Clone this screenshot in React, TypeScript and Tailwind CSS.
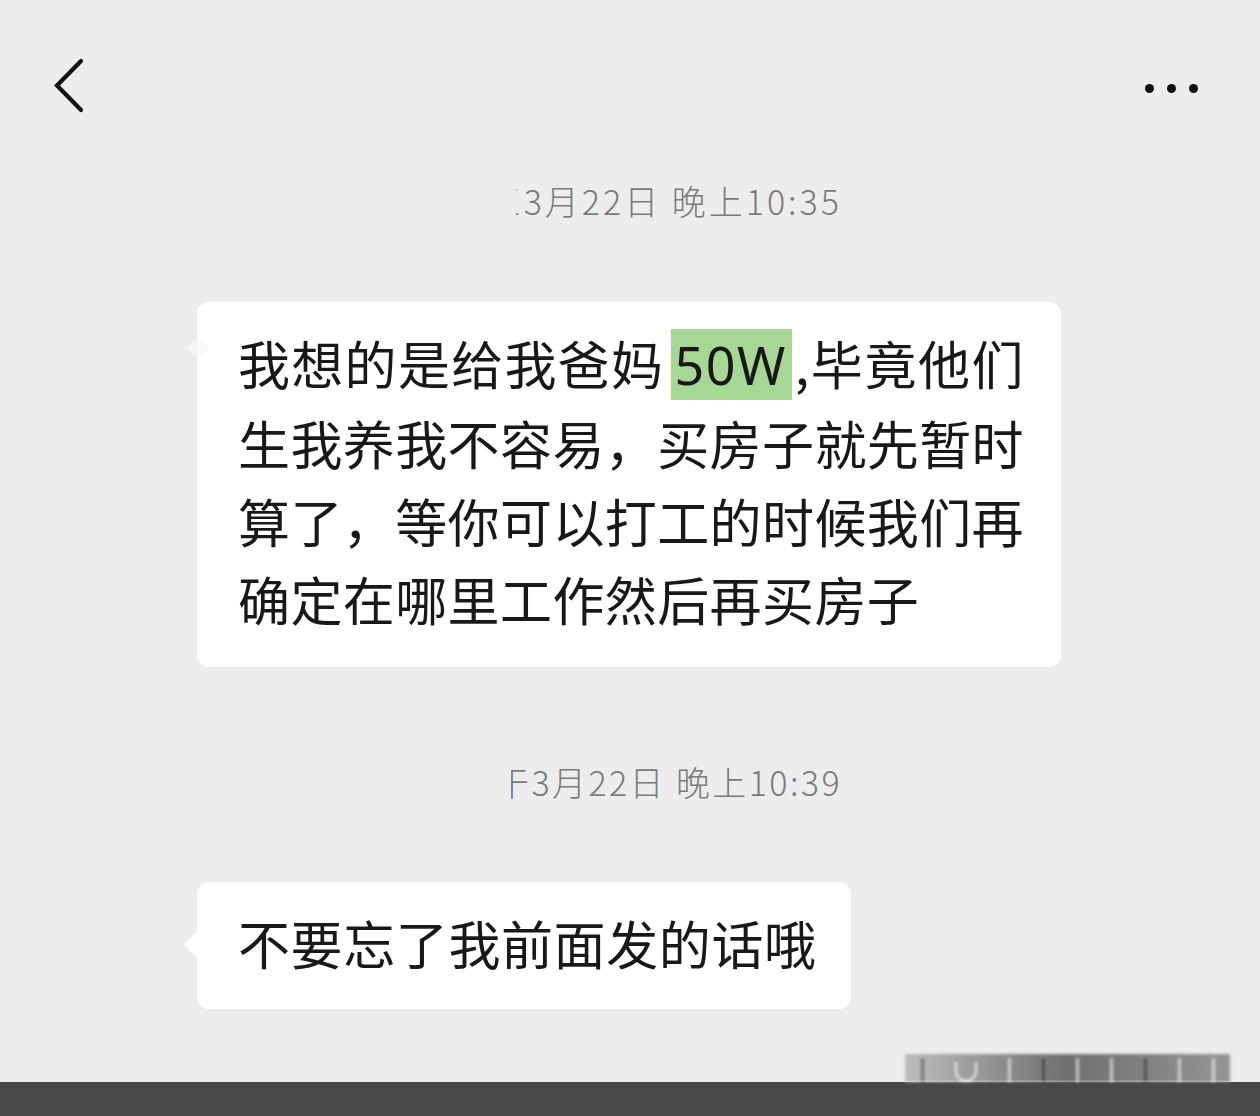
import React from "react";

const cjk = { fontFamily: '"Noto Sans CJK SC", "Noto Sans", sans-serif' };

function Timestamp({ cut, text, cutW, track }: { cut: string; text: string; cutW: string; track: string }) {
  return (
    <div className={`flex justify-end w-[842px] h-[40px] items-center text-[34px] leading-[40px] text-[#7b7b7b] font-light ${track}`} style={cjk}>
      <span className={`overflow-hidden ${cutW} flex justify-end`}>
        <span className="shrink-0">{cut}</span>
      </span>
      <span className="whitespace-pre">{text}</span>
    </div>
  );
}

export default function App() {
  return (
    <div className="w-[1260px] h-[1116px] bg-[#ededed] flex flex-col overflow-hidden" style={cjk}>
      <div className="h-[172px] flex items-center justify-between pl-[52px] pr-[62px]">
        <svg width="34" height="56" viewBox="0 0 34 56">
          <path d="M29 3 L5 27.5 L29 52" fill="none" stroke="#111" strokeWidth="4.2" strokeLinecap="round" strokeLinejoin="miter" />
        </svg>
        <div className="flex items-center gap-[13px] mt-[4px]">
          <span className="w-[9px] h-[9px] rounded-full bg-[#111]" />
          <span className="w-[9px] h-[9px] rounded-full bg-[#111]" />
          <span className="w-[9px] h-[9px] rounded-full bg-[#111]" />
        </div>
      </div>

      <div className="mt-[9px]">
        <Timestamp cut="三" text="3月22日 晚上10:35" cutW="w-[8px]" track="tracking-[3px]" />
      </div>

      <div className="mt-[81px] ml-[197px] relative w-[864px] bg-white rounded-[12px] pl-[41px] pr-[20px] pt-[22px] pb-[29px] text-[52px] leading-[78px] text-[#181818] tracking-[0.4px]">
        <div className="absolute left-[-7px] top-[38px] w-[16px] h-[16px] bg-[#f7f7f7] rotate-45 opacity-70" />
        <div className="whitespace-nowrap">
          <span className="tracking-[1.3px]">我想的是给我爸妈</span>
          <span className="bg-[#a6d795] pl-[3px] pr-[5px] ml-[7px] mr-[3px] tracking-[1.5px]" style={{ fontFamily: '"Noto Sans", "Noto Sans CJK SC", sans-serif' }}>50W</span>
          <span className="tracking-[1.6px]">,毕竟他们</span>
        </div>
        <div>生我养我不容易，买房子就先暂时</div>
        <div>算了，等你可以打工的时候我们再</div>
        <div>确定在哪里工作然后再买房子</div>
      </div>

      <div className="mt-[95px]">
        <Timestamp cut="干" text="3月22日 晚上10:39" cutW="w-[20px]" track="tracking-[2.4px]" />
      </div>

      <div className="mt-[80px] ml-[197px] relative w-[654px] bg-white rounded-[12px] pl-[41px] pt-[22px] pb-[27px] text-[52px] leading-[78px] text-[#181818] tracking-[0.6px]">
        <div className="absolute left-[-9px] top-[53px] w-[19px] h-[19px] bg-white rotate-45" />
        <div>不要忘了我前面发的话哦</div>
      </div>

      <div className="mt-auto relative">
        <div className="absolute right-[30px] bottom-[34px] w-[325px] h-[28px] bg-gradient-to-r from-[#bdbdbd] via-[#6f6f6f] to-[#959595] blur-[1.5px] flex items-end justify-around">
          <div className="w-[3px] h-[24px] bg-[#333] opacity-50" />
          <div className="w-[22px] h-[20px] border-2 border-white border-t-0 rounded-b-full opacity-80" />
          <div className="w-[3px] h-[24px] bg-[#eeeeee] opacity-70" />
          <div className="w-[3px] h-[24px] bg-[#222] opacity-50" />
          <div className="w-[3px] h-[24px] bg-[#eeeeee] opacity-70" />
          <div className="w-[3px] h-[24px] bg-[#eeeeee] opacity-70" />
          <div className="w-[3px] h-[24px] bg-[#222] opacity-50" />
          <div className="w-[3px] h-[24px] bg-[#eeeeee] opacity-70" />
          <div className="w-[3px] h-[24px] bg-[#eeeeee] opacity-70" />
        </div>
        <div className="h-[34px] bg-[#474848]" />
      </div>
    </div>
  );
}
